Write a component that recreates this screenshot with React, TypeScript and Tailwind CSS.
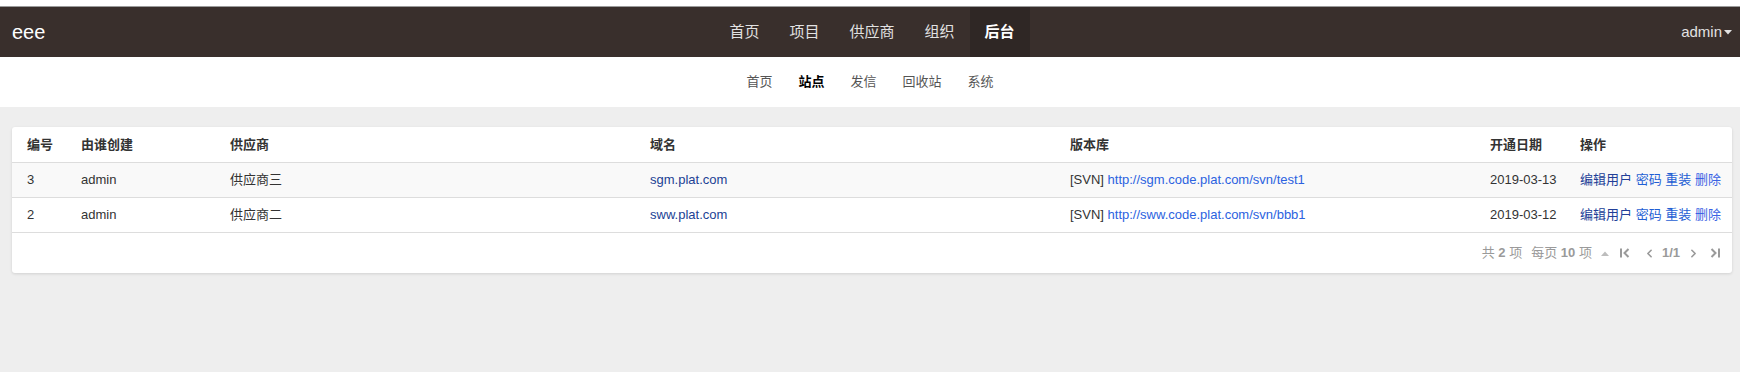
import { ChevronLeft, ChevronRight } from "lucide-react";

const FONT = "font-['Liberation_Sans','Noto_Sans_CJK_SC',sans-serif]";

const mainNav = [
  { label: "首页", w: "w-[60px]" },
  { label: "项目", w: "w-[60px]" },
  { label: "供应商", w: "w-[75px]" },
  { label: "组织", w: "w-[60px]" },
  { label: "后台", w: "w-[60px]", active: true },
];

const subNav = [
  { label: "首页" },
  { label: "站点", active: true },
  { label: "发信" },
  { label: "回收站" },
  { label: "系统" },
];

const sites = [
  {
    id: 3,
    creator: "admin",
    vendor: "供应商三",
    domain: "sgm.plat.com",
    repo: "http://sgm.code.plat.com/svn/test1",
    date: "2019-03-13",
  },
  {
    id: 2,
    creator: "admin",
    vendor: "供应商二",
    domain: "sww.plat.com",
    repo: "http://sww.code.plat.com/svn/bbb1",
    date: "2019-03-12",
  },
];

const cols = "grid grid-cols-[54px_149px_420px_420px_420px_90px_1fr]";
const cell = "whitespace-nowrap pl-[15px]";

function FirstIcon() {
  return (
    <svg width="12" height="12" viewBox="0 0 12 12" fill="none" stroke="#9a9a9a" strokeWidth="2">
      <path d="M2 1.5v9" />
      <path d="M9.5 2 5.5 6l4 4" />
    </svg>
  );
}

function LastIcon() {
  return (
    <svg width="12" height="12" viewBox="0 0 12 12" fill="none" stroke="#9a9a9a" strokeWidth="2">
      <path d="M10 1.5v9" />
      <path d="M2.5 2l4 4-4 4" />
    </svg>
  );
}

export default function App() {
  return (
    <div className={`${FONT} min-h-[372px] bg-[#eeeeee]`}>
      <div className="h-[6px] bg-white" />
      <div className="h-px bg-[#9b9b9b]" />

      {/* top bar */}
      <header className="flex h-[50px] items-stretch bg-[#392f2c] text-[15px] text-[#e2e2e2]">
        <div className="flex flex-1 items-center pl-[12px] text-[20px] text-white">eee</div>
        <nav className="flex">
          {mainNav.map((n) => (
            <a
              key={n.label}
              className={`flex items-center justify-center ${n.w} ${
                n.active ? "bg-[#2f2725] font-bold text-white" : ""
              }`}
            >
              {n.label}
            </a>
          ))}
        </nav>
        <div className="flex flex-1 items-center justify-end pr-[8px]">
          admin
          <svg width="8" height="5" viewBox="0 0 8 5" className="ml-[2px]">
            <path d="M0 0h8L4 4.5z" fill="#e2e2e2" />
          </svg>
        </div>
      </header>

      {/* sub nav */}
      <div className="flex h-[50px] items-center justify-center bg-white text-[13px] text-[#555]">
        {subNav.map((s) => (
          <a key={s.label} className={`px-[13px] ${s.active ? "font-bold text-black" : ""}`}>
            {s.label}
          </a>
        ))}
      </div>

      {/* table card */}
      <div className="ml-[12px] mr-[8px] mt-[20px] rounded-[3px] bg-white text-[13px] text-[#333] shadow-[0_1px_3px_rgba(0,0,0,0.12)]">
        <div className={`${cols} h-[36px] items-center border-b border-[#dddddd] font-bold`}>
          {["编号", "由谁创建", "供应商", "域名", "版本库", "开通日期", "操作"].map((h) => (
            <div key={h} className={cell}>
              {h}
            </div>
          ))}
        </div>
        {sites.map((s, i) => (
          <div
            key={s.id}
            className={`${cols} h-[35px] items-center border-b border-[#dddddd] ${
              i === 0 ? "bg-[#f9f9f9]" : ""
            }`}
          >
            <div className={cell}>{s.id}</div>
            <div className={cell}>{s.creator}</div>
            <div className={cell}>{s.vendor}</div>
            <div className={cell}>
              <a className="text-[#213f94]">{s.domain}</a>
            </div>
            <div className={cell}>
              [SVN] <a className="text-[#2b62e0]">{s.repo}</a>
            </div>
            <div className={cell}>{s.date}</div>
            <div className={cell}>
              <a className="text-[#223f98]">编辑用户</a> <a className="text-[#1f5fd4]">密码</a>{" "}
              <a className="text-[#1f5fd4]">重装</a> <a className="text-[#3b63e4]">删除</a>
            </div>
          </div>
        ))}

        {/* pager */}
        <div className="flex h-[40px] items-center justify-end pr-[11px] text-[#9a9a9a]">
          <span>
            共 <b>2</b> 项
          </span>
          <span className="ml-[9px]">
            每页 <b>10</b> 项
          </span>
          <svg width="8" height="5" viewBox="0 0 8 5" className="ml-[9px]">
            <path d="M0 5h8L4 0.5z" fill="#bdbdbd" />
          </svg>
          <span className="ml-[10px] flex">
            <FirstIcon />
          </span>
          <ChevronLeft className="ml-[12px]" size={13} strokeWidth={3} color="#9a9a9a" />
          <b className="ml-[6px]">1/1</b>
          <ChevronRight className="ml-[7px]" size={13} strokeWidth={3} color="#9a9a9a" />
          <span className="ml-[9px] flex">
            <LastIcon />
          </span>
        </div>
      </div>
    </div>
  );
}
